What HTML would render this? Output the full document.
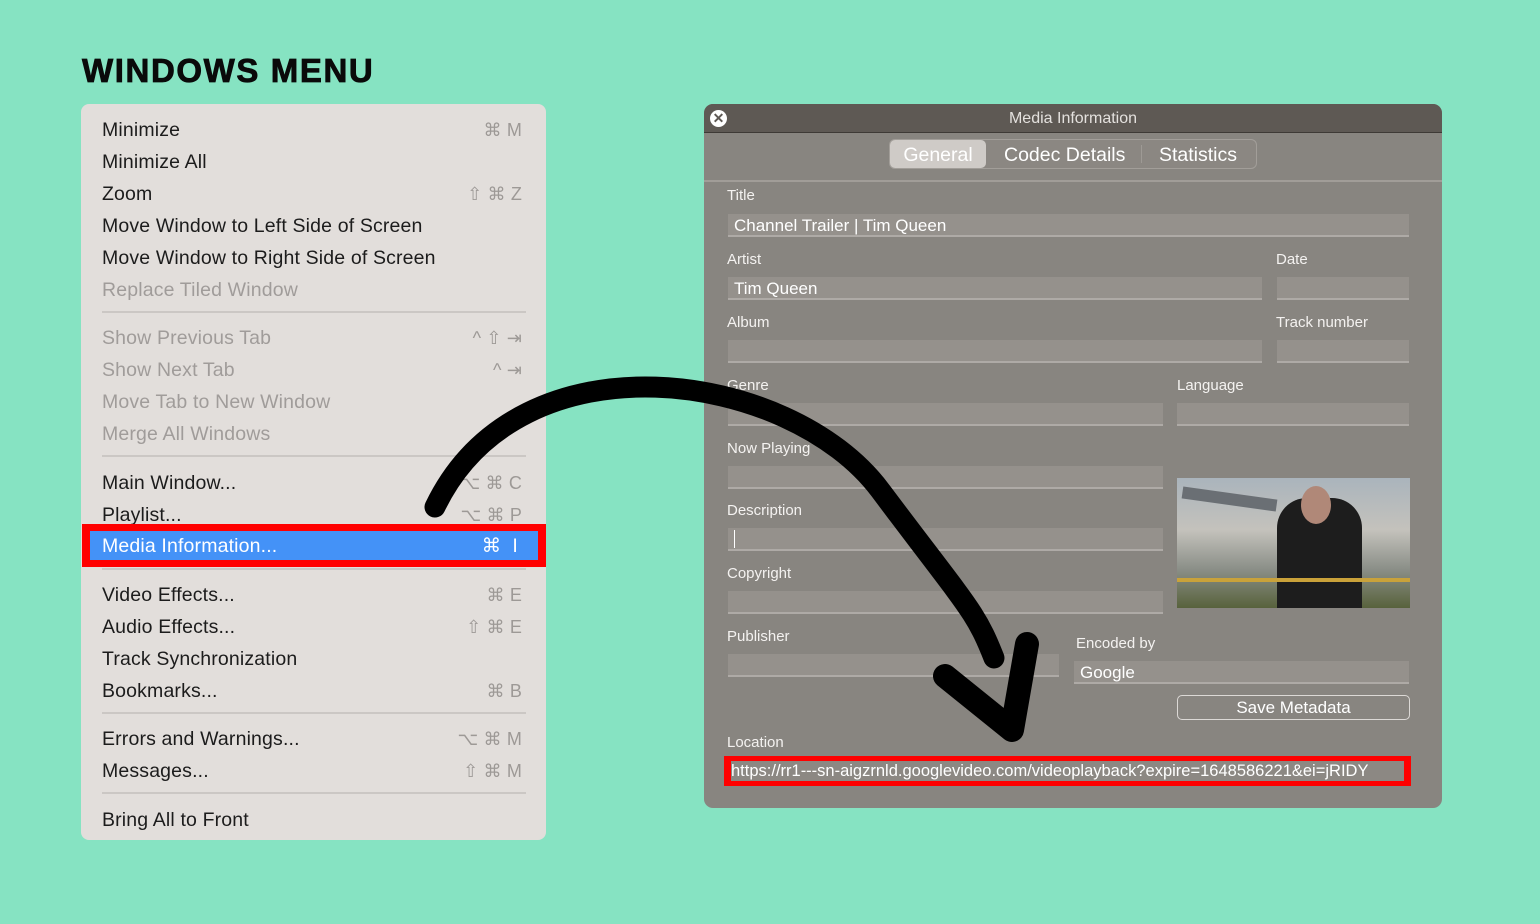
<!DOCTYPE html>
<html><head><meta charset="utf-8"><style>
*{margin:0;padding:0;box-sizing:border-box}
body{width:1540px;height:924px;background:#86e3c2;position:relative;overflow:hidden;font-family:"Liberation Sans",sans-serif}
.abs{position:absolute}
h1{position:absolute;left:82px;top:52px;font-size:33px;font-weight:900;letter-spacing:1.6px;color:#0a0a0a;-webkit-text-stroke:0.8px #0a0a0a}
.menu{left:81px;top:104px;width:465px;height:736px;background:#e2dedb;border-radius:8px}
.it{position:absolute;left:21px;right:24px;height:30px;font-size:19.5px;line-height:34px;color:#1c1c1c;letter-spacing:0.15px}
.it.d{color:#a09c9a}
.it span{position:absolute;right:0;color:#9d9996;font-size:18px}
.sep{position:absolute;left:21px;right:20px;height:2px;background:#cbc7c4}
.win{left:704px;top:104px;width:738px;height:704px;background:#888580;border-radius:9px;overflow:hidden}
.tb{position:absolute;left:0;top:0;right:0;height:29px;background:#5e5954;border-bottom:1px solid #3e3a36;color:#e4e1de;font-size:16px;text-align:center;line-height:30px}
.lab{position:absolute;color:#f4f2f0;font-size:15px}
.f{position:absolute;height:23px;background:#95918c;border-bottom:2px solid #aeaaa6;color:#fff;font-size:17px;line-height:23px;padding-left:6px}
</style></head><body>
<h1>WINDOWS MENU</h1>
<div class="abs menu">
<div class="it" style="top:9px">Minimize<span>⌘ M</span></div>
<div class="it" style="top:41px">Minimize All</div>
<div class="it" style="top:73px">Zoom<span>⇧ ⌘ Z</span></div>
<div class="it" style="top:105px">Move Window to Left Side of Screen</div>
<div class="it" style="top:137px">Move Window to Right Side of Screen</div>
<div class="it d" style="top:169px">Replace Tiled Window</div>
<div class="sep" style="top:207px"></div>
<div class="it d" style="top:217px">Show Previous Tab<span>^ ⇧ ⇥</span></div>
<div class="it d" style="top:249px">Show Next Tab<span>^ ⇥</span></div>
<div class="it d" style="top:281px">Move Tab to New Window</div>
<div class="it d" style="top:313px">Merge All Windows</div>
<div class="sep" style="top:351px"></div>
<div class="it" style="top:362px">Main Window...<span>⌥ ⌘ C</span></div>
<div class="it" style="top:394px">Playlist...<span>⌥ ⌘ P</span></div>
<div class="sep" style="top:464px"></div>
<div class="it" style="top:474px">Video Effects...<span>⌘ E</span></div>
<div class="it" style="top:506px">Audio Effects...<span>⇧ ⌘ E</span></div>
<div class="it" style="top:538px">Track Synchronization</div>
<div class="it" style="top:570px">Bookmarks...<span>⌘ B</span></div>
<div class="sep" style="top:608px"></div>
<div class="it" style="top:618px">Errors and Warnings...<span>⌥ ⌘ M</span></div>
<div class="it" style="top:650px">Messages...<span>⇧ ⌘ M</span></div>
<div class="sep" style="top:688px"></div>
<div class="it" style="top:699px">Bring All to Front</div>
</div>
<div class="abs" style="left:82px;top:524px;width:464px;height:43px;background:#ff0000"></div>
<div class="abs" style="left:90px;top:531px;width:448px;height:29px;background:#4492f7;color:#fff;font-size:19.5px;line-height:30px;padding-left:12px;letter-spacing:0.15px">Media Information...<span style="position:absolute;right:20px">⌘&nbsp;&nbsp;I</span></div>

<div class="abs win">
<div class="tb">Media Information</div>
<div class="abs" style="left:6px;top:6px;width:17px;height:17px;border-radius:50%;background:#fff;color:#5e5954;font-size:14px;font-weight:bold;line-height:17px;text-align:center">✕</div>
<div class="abs" style="left:185px;top:35px;width:368px;height:30px;border:1px solid #a29e99;border-radius:6px;background:#8b8782"></div>
<div class="abs" style="left:186px;top:36px;width:96px;height:28px;border-radius:5px;background:#cfcbc7;color:#fff;font-size:19.5px;text-align:center;line-height:30px">General</div>
<div class="abs" style="left:300px;top:36px;color:#fff;font-size:19.5px;line-height:30px">Codec Details</div>
<div class="abs" style="left:437px;top:41px;width:1px;height:18px;background:#9e9a95"></div>
<div class="abs" style="left:455px;top:36px;color:#fff;font-size:19.5px;line-height:30px">Statistics</div>
<div class="abs" style="left:0;right:0;top:76px;height:2px;background:#a19d98"></div>
<div class="lab" style="left:23px;top:83px">Title</div>
<div class="f" style="left:24px;top:110px;width:681px">Channel Trailer | Tim Queen</div>
<div class="lab" style="left:23px;top:147px">Artist</div>
<div class="lab" style="left:572px;top:147px">Date</div>
<div class="f" style="left:24px;top:173px;width:534px">Tim Queen</div>
<div class="f" style="left:573px;top:173px;width:132px"></div>
<div class="lab" style="left:23px;top:210px">Album</div>
<div class="lab" style="left:572px;top:210px">Track number</div>
<div class="f" style="left:24px;top:236px;width:534px"></div>
<div class="f" style="left:573px;top:236px;width:132px"></div>
<div class="lab" style="left:23px;top:273px">Genre</div>
<div class="lab" style="left:473px;top:273px">Language</div>
<div class="f" style="left:24px;top:299px;width:435px"></div>
<div class="f" style="left:473px;top:299px;width:232px"></div>
<div class="lab" style="left:23px;top:336px">Now Playing</div>
<div class="f" style="left:24px;top:362px;width:435px"></div>
<div class="lab" style="left:23px;top:398px">Description</div>
<div class="f" style="left:24px;top:424px;width:435px"><span style="display:inline-block;width:1px;height:18px;background:#fff;margin-top:2px"></span></div>
<div class="lab" style="left:23px;top:461px">Copyright</div>
<div class="f" style="left:24px;top:487px;width:435px"></div>
<div class="lab" style="left:23px;top:524px">Publisher</div>
<div class="f" style="left:24px;top:550px;width:331px"></div>
<div class="lab" style="left:372px;top:531px">Encoded by</div>
<div class="f" style="left:370px;top:557px;width:335px">Google</div>
<div class="abs" style="left:473px;top:591px;width:233px;height:25px;border:1px solid #dcd9d6;border-radius:5px;color:#fff;font-size:17px;text-align:center;line-height:24px">Save Metadata</div>
<div class="lab" style="left:23px;top:630px">Location</div>
<div class="abs" style="left:20px;top:652px;width:687px;height:30px;background:#f00"></div>
<div class="abs" style="left:27px;top:657px;width:673px;height:20px;background:#8c8883;color:#fff;font-size:16.5px;line-height:21px;white-space:nowrap;overflow:hidden">https://rr1---sn-aigzrnld.googlevideo.com/videoplayback?expire=1648586221&amp;ei=jRIDY</div>
<div class="abs" style="left:473px;top:374px;width:233px;height:130px;background:linear-gradient(180deg,#aab4bc 0%,#c4c2bc 40%,#8b8f88 70%,#58623c 100%);overflow:hidden">
<div class="abs" style="left:100px;top:20px;width:85px;height:110px;background:#1d1d1d;border-radius:30px 30px 0 0"></div>
<div class="abs" style="left:124px;top:8px;width:30px;height:38px;background:#b08878;border-radius:50%"></div>
<div class="abs" style="left:5px;top:15px;width:95px;height:12px;background:#6a6f74;transform:rotate(8deg)"></div>
<div class="abs" style="left:0;top:100px;width:233px;height:4px;background:#c9a23a"></div>
</div>
</div>
<svg class="abs" style="left:0;top:0" width="1540" height="924">
<path d="M435,507 C520,330 790,370 880,490 S975,610 994,658" fill="none" stroke="#000" stroke-width="21" stroke-linecap="round"/>
<path d="M945,676 L1012,730 L1027,644" fill="none" stroke="#000" stroke-width="24" stroke-linecap="round" stroke-linejoin="round"/>
</svg>
</body></html>
